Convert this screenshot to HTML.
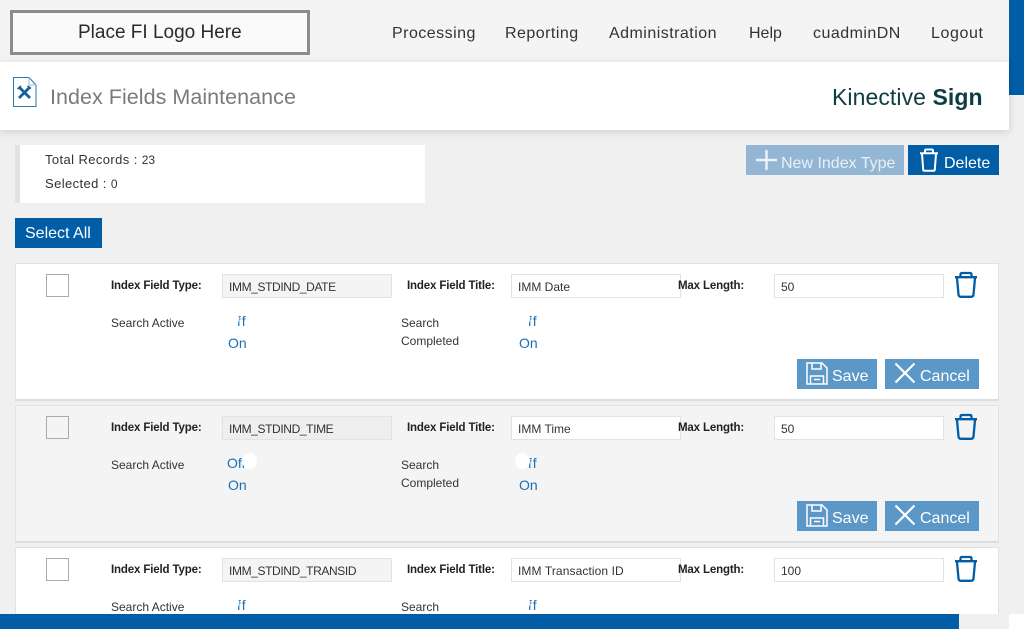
<!DOCTYPE html>
<html><head><meta charset="utf-8"><style>
html,body{margin:0;padding:0;width:1024px;height:629px;overflow:hidden;background:#f0f0f0;font-family:"Liberation Sans",sans-serif;color:#222}
div,span,svg{position:absolute;box-sizing:border-box}
.t{white-space:nowrap;line-height:16px}
.nav{top:25px;font-size:16px;color:#333;line-height:18px;white-space:nowrap;letter-spacing:.47px}
.card{left:15px;width:984px;border:1px solid #e2e2e2;border-bottom:2px solid #ddd;background:#fff}
.grey{background:#f4f4f4}
.b{font-size:11.500px;font-weight:bold;color:#222;white-space:nowrap;line-height:14px;letter-spacing:-.15px;top:15px}
.l{font-size:12px;color:#333;white-space:nowrap;line-height:18px}
.in{height:24px;border:1px solid #e2e2e2;background:#fff;font-size:12px;line-height:24px;padding-left:6px;color:#333;white-space:nowrap}
.ro{background:#f4f4f4;letter-spacing:-.38px}
.grey .ro{background:#eeeeee}
.cb{left:30px;width:23px;height:23px;border:1px solid #aaa;background:#fff}
.grey .cb{background:#f4f4f4}
.tg{font-size:14px;color:#1a6fb5;line-height:16px;white-space:nowrap}
.tg i{font-style:normal;letter-spacing:1px}
.kn{width:15px;height:16px;border-radius:50%;top:47px;background:#fff}
.btn{background:#5b97c7;color:#fff;height:30px;top:95px;font-size:16px;line-height:36px;white-space:nowrap}
</style></head><body>

<div style="left:0;top:0;width:1009px;height:62px;background:#f4f4f4"></div>
<div style="left:10px;top:10px;width:300px;height:45px;border:3px solid #8c8c8c;background:#fafafa"></div>
<div class="t" style="left:78px;top:22px;font-size:19px;line-height:22px;color:#2a2a2a">Place FI Logo Here</div>

<div class="nav" style="left:392px">Processing</div>
<div class="nav" style="left:505px">Reporting</div>
<div class="nav" style="left:609px">Administration</div>
<div class="nav" style="left:749px;letter-spacing:0">Help</div>
<div class="nav" style="left:813px">cuadminDN</div>
<div class="nav" style="left:931px;letter-spacing:.6px">Logout</div>

<div style="left:1009px;top:0;width:15px;height:95px;background:#005da6"></div>

<div style="left:0;top:62px;width:1009px;height:68px;background:#fff;box-shadow:0 2px 8px rgba(0,0,0,.14)"></div>
<svg style="left:12px;top:76px" width="25" height="32" viewBox="0 0 25 32">
<path d="M1.500 1.500H17L24 9V30.500H1.500Z" fill="#fff" stroke="#2a78b4" stroke-width="1"/>
<path d="M17 1.500V9H24" fill="none" stroke="#9cc0dc" stroke-width="1"/>
<path d="M7 11L18 22M18 11L7 22" stroke="#14609f" stroke-width="2.800" fill="none"/>
<path d="M5.500 13L9 10M15.500 10L19 12.500" stroke="#14609f" stroke-width="1.600" fill="none"/>
</svg>
<div class="t" style="left:50px;top:85px;font-size:21.500px;line-height:24px;color:#777b80;letter-spacing:.04px">Index Fields Maintenance</div>
<div class="t" style="left:832px;top:84px;font-size:23px;line-height:26px;color:#0e3c44;letter-spacing:.08px">Kinective <b>Sign</b></div>

<div style="left:15px;top:145px;width:410px;height:58px;background:#fff;border-left:5px solid #e2e2e2"></div>
<div class="t" style="left:45px;top:152px;font-size:13px;color:#333;letter-spacing:.4px">Total Records : <span style="position:static;font-size:12px;letter-spacing:0">23</span></div>
<div class="t" style="left:45px;top:176px;font-size:13px;color:#333;letter-spacing:.4px">Selected : <span style="position:static;font-size:12px;letter-spacing:0">0</span></div>

<div style="left:746px;top:145px;width:158px;height:30px;background:#93b6d4"></div>
<svg style="left:755px;top:149px" width="23" height="22" viewBox="0 0 23 22"><path d="M11.500 1V21M1 11H22" stroke="#eef3f8" stroke-width="2.400" fill="none"/></svg>
<div class="t" style="left:781px;top:155px;font-size:16px;line-height:18px;color:#e9f0f6">New Index Type</div>
<div style="left:908px;top:145px;width:91px;height:30px;background:#005da6"></div>
<svg style="left:919px;top:148px" width="20" height="24" viewBox="0 0 20 24"><path d="M3 6L4.200 21.500Q4.300 22.800 5.500 22.800H14.500Q15.700 22.800 15.800 21.500L17 6M1 5.200H19M6 5V2.800Q6 1.500 7.200 1.500H12.800Q14 1.500 14 2.800V5" fill="none" stroke="#fff" stroke-width="2"/></svg>
<div class="t" style="left:944px;top:155px;font-size:16px;line-height:18px;color:#fff">Delete</div>

<div style="left:15px;top:218px;width:87px;height:30px;background:#005da6"></div>
<div class="t" style="left:25px;top:225px;font-size:16px;line-height:18px;color:#fff">Select All</div>

<!-- Card 1 -->
<div class="card" style="top:263px;height:138px">
<div class="cb" style="top:10px"></div>
<div class="b" style="left:95px">Index Field Type:</div>
<div class="in ro" style="left:206px;top:10px;width:170px">IMM_STDIND_DATE</div>
<div class="b" style="left:391px">Index Field Title:</div>
<div class="in" style="left:495px;top:10px;width:170px">IMM Date</div>
<div class="b" style="left:662px">Max Length:</div>
<div class="in" style="left:758px;top:10px;width:170px">50</div>
<svg style="left:938px;top:7px" width="24" height="28" viewBox="0 0 24 28"><path d="M3 7L4.500 23.500Q4.700 25.800 7 25.800H17Q19.300 25.800 19.500 23.500L21 7M1 6.200H23M6.500 6V3.500Q6.500 2 8 2H16Q17.500 2 17.500 3.500V6" fill="none" stroke="#005da6" stroke-width="2.300"/></svg>
<div class="l" style="left:95px;top:50px">Search Active</div>
<div class="tg" style="left:210px;top:49px">O<i>f</i>f</div>
<div class="kn" style="left:208px"></div>
<div class="tg" style="left:212px;top:71px">On</div>
<div class="l" style="left:385px;top:50px">Search</div>
<div class="l" style="left:385px;top:68px">Completed</div>
<div class="tg" style="left:501px;top:49px">O<i>f</i>f</div>
<div class="kn" style="left:499px"></div>
<div class="tg" style="left:503px;top:71px">On</div>
<div class="btn" style="left:781px;width:80px"><svg style="left:9px;top:3px" width="22" height="23" viewBox="0 0 22 23"><path d="M1 1H16L21 6V22H1ZM6 1V7H15V1M4.500 22V14H17.500V22M8 17.500H14" fill="none" stroke="#fff" stroke-width="1.500"/></svg><span style="left:35px;top:0">Save</span></div>
<div class="btn" style="left:869px;width:94px"><svg style="left:9px;top:3px" width="22" height="22" viewBox="0 0 22 22"><path d="M1.500 1.500L20.500 20.500M20.500 1.500L1.500 20.500" fill="none" stroke="#fff" stroke-width="2.200"/></svg><span style="left:35px;top:0">Cancel</span></div>
</div>

<!-- Card 2 -->
<div class="card grey" style="top:405px;height:138px">
<div class="cb" style="top:10px"></div>
<div class="b" style="left:95px">Index Field Type:</div>
<div class="in ro" style="left:206px;top:10px;width:170px">IMM_STDIND_TIME</div>
<div class="b" style="left:391px">Index Field Title:</div>
<div class="in" style="left:495px;top:10px;width:170px">IMM Time</div>
<div class="b" style="left:662px">Max Length:</div>
<div class="in" style="left:758px;top:10px;width:170px">50</div>
<svg style="left:938px;top:7px" width="24" height="28" viewBox="0 0 24 28"><path d="M3 7L4.500 23.500Q4.700 25.800 7 25.800H17Q19.300 25.800 19.500 23.500L21 7M1 6.200H23M6.500 6V3.500Q6.500 2 8 2H16Q17.500 2 17.500 3.500V6" fill="none" stroke="#005da6" stroke-width="2.300"/></svg>
<div class="l" style="left:95px;top:50px">Search Active</div>
<div class="tg" style="left:211px;top:49px">Off</div>
<div class="kn" style="left:226px"></div>
<div class="tg" style="left:212px;top:71px">On</div>
<div class="l" style="left:385px;top:50px">Search</div>
<div class="l" style="left:385px;top:68px">Completed</div>
<div class="tg" style="left:501px;top:49px">O<i>f</i>f</div>
<div class="kn" style="left:499px"></div>
<div class="tg" style="left:503px;top:71px">On</div>
<div class="btn" style="left:781px;width:80px"><svg style="left:9px;top:3px" width="22" height="23" viewBox="0 0 22 23"><path d="M1 1H16L21 6V22H1ZM6 1V7H15V1M4.500 22V14H17.500V22M8 17.500H14" fill="none" stroke="#fff" stroke-width="1.500"/></svg><span style="left:35px;top:0">Save</span></div>
<div class="btn" style="left:869px;width:94px"><svg style="left:9px;top:3px" width="22" height="22" viewBox="0 0 22 22"><path d="M1.500 1.500L20.500 20.500M20.500 1.500L1.500 20.500" fill="none" stroke="#fff" stroke-width="2.200"/></svg><span style="left:35px;top:0">Cancel</span></div>
</div>

<!-- Card 3 -->
<div class="card" style="top:547px;height:67px;border-bottom:0">
<div class="cb" style="top:10px"></div>
<div class="b" style="left:95px">Index Field Type:</div>
<div class="in ro" style="left:206px;top:10px;width:170px">IMM_STDIND_TRANSID</div>
<div class="b" style="left:391px">Index Field Title:</div>
<div class="in" style="left:495px;top:10px;width:170px;letter-spacing:.1px">IMM Transaction ID</div>
<div class="b" style="left:662px">Max Length:</div>
<div class="in" style="left:758px;top:10px;width:170px">100</div>
<svg style="left:938px;top:7px" width="24" height="28" viewBox="0 0 24 28"><path d="M3 7L4.500 23.500Q4.700 25.800 7 25.800H17Q19.300 25.800 19.500 23.500L21 7M1 6.200H23M6.500 6V3.500Q6.500 2 8 2H16Q17.500 2 17.500 3.500V6" fill="none" stroke="#005da6" stroke-width="2.300"/></svg>
<div class="l" style="left:95px;top:50px">Search Active</div>
<div class="tg" style="left:210px;top:49px">O<i>f</i>f</div>
<div class="kn" style="left:208px"></div>
<div class="l" style="left:385px;top:50px">Search</div>
<div class="tg" style="left:501px;top:49px">O<i>f</i>f</div>
<div class="kn" style="left:499px"></div>
</div>

<div style="left:0;top:614px;width:959px;height:15px;background:#005da6"></div>
<div style="left:959px;top:614px;width:50px;height:15px;background:#f0f0f0"></div>
<div style="left:1009px;top:614px;width:15px;height:15px;background:#fff"></div>
</body></html>
